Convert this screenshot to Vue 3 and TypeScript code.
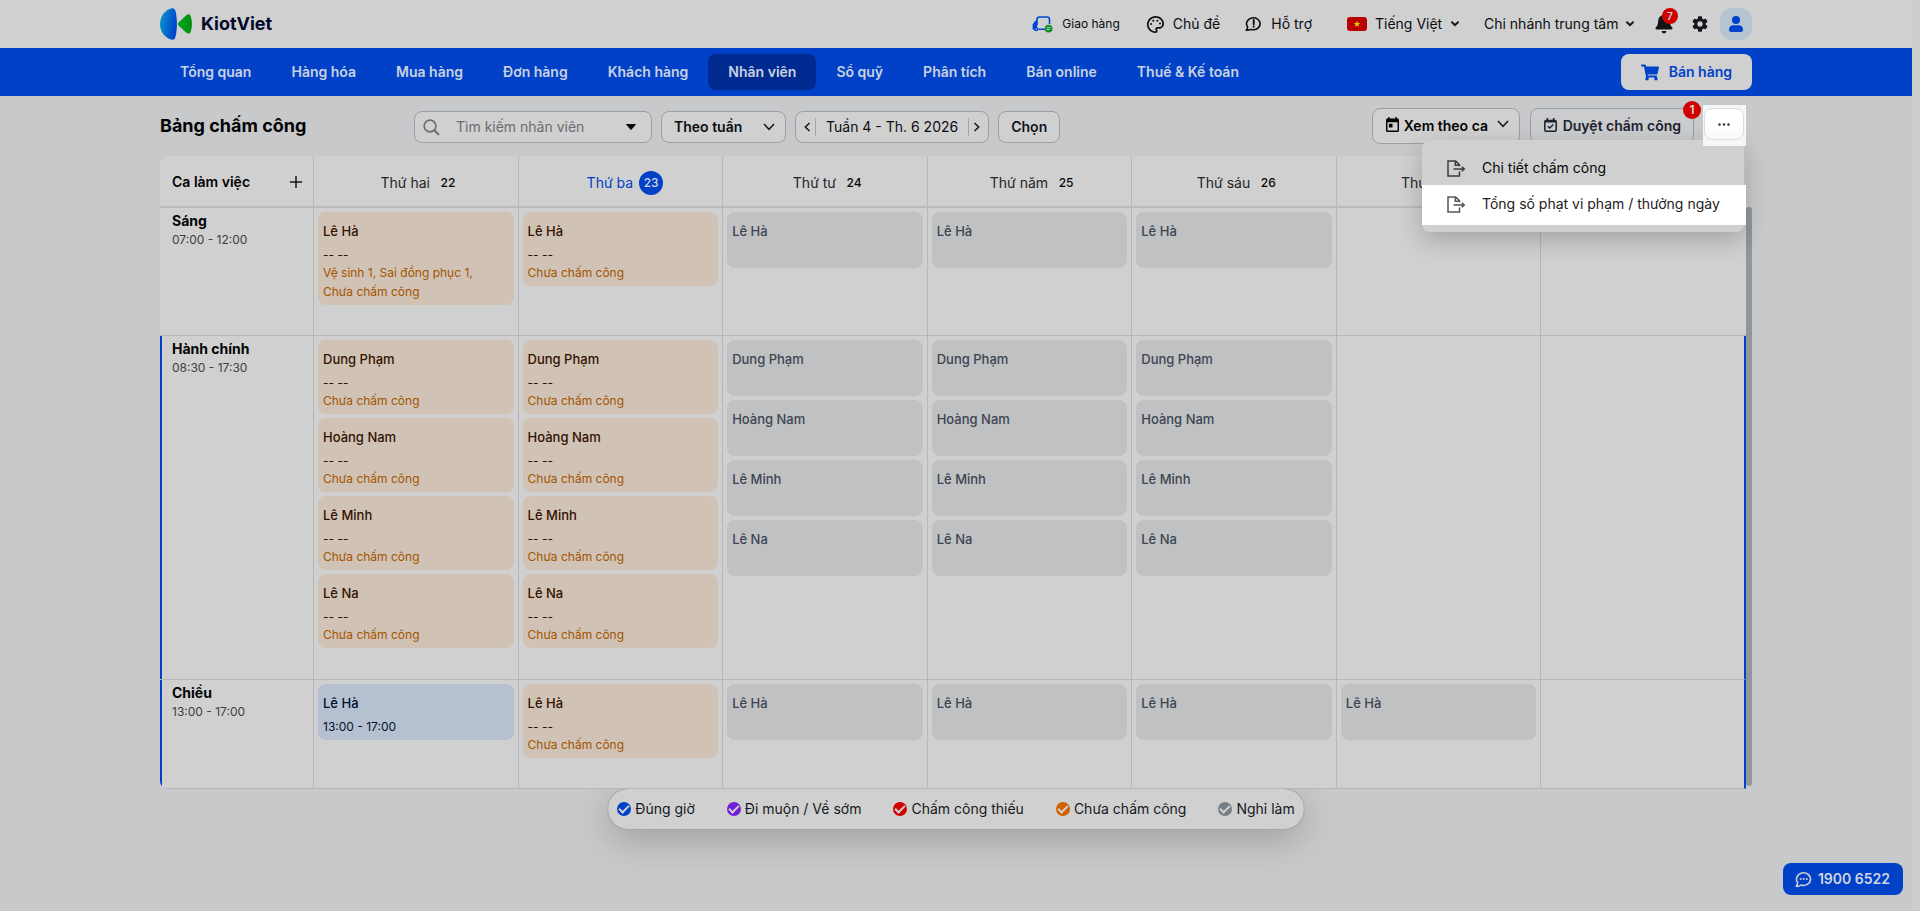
<script setup lang="ts">
type CardKind = 'missing' | 'ontime' | 'planned'

interface Card {
  name: string
  kind: CardKind
  time?: string
  notes: string[]
}

interface Shift {
  name: string
  hours: string
  current: boolean
  tall: boolean
  days: Card[][]
}

const menu = ['Tổng quan', 'Hàng hóa', 'Mua hàng', 'Đơn hàng', 'Khách hàng', 'Nhân viên', 'Sổ quỹ', 'Phân tích', 'Bán online', 'Thuế & Kế toán']
const activeMenu = 'Nhân viên'

const days = [
  { label: 'Thứ hai', date: 22 },
  { label: 'Thứ ba', date: 23 },
  { label: 'Thứ tư', date: 24 },
  { label: 'Thứ năm', date: 25 },
  { label: 'Thứ sáu', date: 26 },
  { label: 'Thứ bảy', date: 27 },
  { label: 'Chủ nhật', date: 28 },
]
const today = 23

const missing = (name: string, extra: string[] = []): Card => ({
  name,
  kind: 'missing',
  time: '-- --',
  notes: [...extra, 'Chưa chấm công'],
})
const planned = (name: string): Card => ({ name, kind: 'planned', notes: [] })
const team = ['Dung Phạm', 'Hoàng Nam', 'Lê Minh', 'Lê Na']

const shifts: Shift[] = [
  {
    name: 'Sáng',
    hours: '07:00 - 12:00',
    current: false,
    tall: false,
    days: [
      [missing('Lê Hà', ['Vệ sinh 1, ', 'Sai đồng phục 1, '])],
      [missing('Lê Hà')],
      [planned('Lê Hà')],
      [planned('Lê Hà')],
      [planned('Lê Hà')],
      [],
      [],
    ],
  },
  {
    name: 'Hành chính',
    hours: '08:30 - 17:30',
    current: true,
    tall: true,
    days: [
      team.map((n) => missing(n)),
      team.map((n) => missing(n)),
      team.map(planned),
      team.map(planned),
      team.map(planned),
      [],
      [],
    ],
  },
  {
    name: 'Chiều',
    hours: '13:00 - 17:00',
    current: true,
    tall: false,
    days: [
      [{ name: 'Lê Hà', kind: 'ontime', time: '13:00 - 17:00', notes: [] }],
      [missing('Lê Hà')],
      [planned('Lê Hà')],
      [planned('Lê Hà')],
      [planned('Lê Hà')],
      [planned('Lê Hà')],
      [],
    ],
  },
]

const legend = [
  { label: 'Đúng giờ', tone: 'blue' },
  { label: 'Đi muộn / Về sớm', tone: 'purple' },
  { label: 'Chấm công thiếu', tone: 'red' },
  { label: 'Chưa chấm công', tone: 'orange' },
  { label: 'Nghỉ làm', tone: 'gray' },
]

const exportsMenu = [
  { label: 'Chi tiết chấm công', active: false },
  { label: 'Tổng số phạt vi phạm / thưởng ngày', active: true },
]
</script>

<template>
  <div class="app">
    <header class="topbar">
      <a class="brand" href="#">
        <svg width="32" height="32" viewBox="0 0 32 32" aria-hidden="true">
          <defs>
            <linearGradient id="wing" x1="0" y1="0" x2="1" y2="0.3">
              <stop offset="0" stop-color="#0a9bc9" />
              <stop offset="1" stop-color="#0046cc" />
            </linearGradient>
            <linearGradient id="leaf" x1="0" y1="0" x2="1" y2="0">
              <stop offset="0" stop-color="#00ac20" />
              <stop offset="1" stop-color="#0a8a10" />
            </linearGradient>
          </defs>
          <path d="M12 0.2C14 0 15 1 15.700 4C17.300 11 17.300 21 15.700 28C15 31 14 32 12 31.800C5 30 0 24 0 16S5 2 12 0.200Z" fill="url(#wing)" />
          <path d="M18.400 14.600L26 7.400C28 5.700 29.800 6 30.600 8C32.400 13 32.400 19 30.600 24C29.800 26 28 26.300 26 24.600L18.400 17.400C17.600 16.600 17.600 15.400 18.400 14.600Z" fill="url(#leaf)" />
        </svg>
        <span>KiotViet</span>
      </a>

      <div class="top-actions">
        <a class="top-link delivery" href="#">
          <svg width="21" height="17" viewBox="0 0 21 17" aria-hidden="true">
            <path d="M5 9V3.500Q5 1 7.500 1H15Q17.500 1 17.500 3.500V8M6.500 13.200H13" fill="none" stroke="#0047d0" stroke-width="1.600" />
            <path d="M5.200 4.800H3.200L0.600 8.600V13.400H2A1.600 1.600 0 0 0 5.200 13.600Z" fill="#0047d0" />
            <circle cx="4.400" cy="13.200" r="2" fill="#0047d0" />
            <circle cx="4.400" cy="13.200" r="0.700" fill="#d0d0d0" />
            <circle cx="16.600" cy="12.600" r="3.900" fill="#0f8f26" />
            <path d="M14.600 11.700H18.600M14.600 13.500H17.600" stroke="#d0d0d0" stroke-width="0.900" />
          </svg>
          <span>Giao hàng</span>
        </a>
        <a class="top-link theme" href="#">
          <svg width="17" height="17" viewBox="2 2 20 20" aria-hidden="true">
            <path fill="#0a0d12" d="M12 22C6.490 22 2 17.510 2 12S6.490 2 12 2s10 4.040 10 9c0 3.310-2.690 6-6 6h-1.770c-.28 0-.5.22-.5.5 0 .12.050.23.130.33.410.47.640 1.060.640 1.670A2.500 2.500 0 0 1 12 22zm0-18c-4.410 0-8 3.590-8 8s3.590 8 8 8c.28 0 .5-.22.5-.5a.54.54 0 0 0-.14-.35c-.41-.46-.63-1.050-.63-1.650a2.500 2.500 0 0 1 2.500-2.500H16c2.210 0 4-1.790 4-4 0-3.860-3.590-7-8-7z" />
            <g fill="#0a0d12"><circle cx="6.800" cy="11.500" r="1.200" /><circle cx="9.400" cy="7.700" r="1.200" /><circle cx="14.200" cy="7.500" r="1.200" /><circle cx="17.300" cy="10.800" r="1.200" /></g>
          </svg>
          <span>Chủ đề</span>
        </a>
        <a class="top-link support" href="#">
          <svg width="17" height="16" viewBox="0 0 17 16" aria-hidden="true">
            <path d="M2.600 11A6.800 6 0 1 1 6 13.400Q4.200 14.400 1.200 14.300Q2.700 13 2.600 11Z" fill="none" stroke="#0a0d12" stroke-width="1.600" stroke-linejoin="round" />
            <path d="M8.700 4V8.200" stroke="#0a0d12" stroke-width="1.900" stroke-linecap="round" />
            <circle cx="8.700" cy="10.600" r="1.100" fill="#0a0d12" />
          </svg>
          <span>Hỗ trợ</span>
        </a>
        <div class="picker language">
          <svg width="20" height="14" viewBox="0 0 20 14" aria-hidden="true">
            <rect width="20" height="14" rx="3" fill="#b80000" />
            <path d="M10 3.500L10.900 6H13.400L11.400 7.600L12.100 10.100L10 8.600L7.900 10.100L8.600 7.600L6.600 6H9.100Z" fill="#d8d000" />
          </svg>
          <select aria-label="Ngôn ngữ"><option>Tiếng Việt</option></select>
          <svg class="small-caret" width="8" height="6" viewBox="0 0 8 6" aria-hidden="true"><path d="M1 1.200L4 4.200L7 1.200" /></svg>
        </div>
        <div class="picker branch">
          <select aria-label="Chi nhánh"><option>Chi nhánh trung tâm</option></select>
          <svg class="small-caret" width="8" height="6" viewBox="0 0 8 6" aria-hidden="true"><path d="M1 1.200L4 4.200L7 1.200" /></svg>
        </div>
        <button class="plain bell" type="button" aria-label="Thông báo">
          <svg width="18" height="20" viewBox="0 0 18 20" aria-hidden="true">
            <path d="M9 1C5.500 1 3.400 3.600 3.200 7C3 11 2 12 0.800 13.600C0 14.800 0.600 15.600 1.800 15.600H16.200C17.400 15.600 18 14.800 17.200 13.600C16 12 15 11 14.800 7C14.600 3.600 12.500 1 9 1Z" fill="#11151a" />
            <path d="M6.600 17H11.400A2.400 2.400 0 0 1 6.600 17Z" fill="#11151a" />
          </svg>
          <span class="badge">7</span>
        </button>
        <button class="plain gear" type="button" aria-label="Thiết lập">
          <svg width="16" height="16" viewBox="2 2 20 20" aria-hidden="true">
            <path fill="#11151a" d="M19.140 12.940c.04-.3.060-.61.060-.94s-.02-.64-.07-.94l2.030-1.580a.49.49 0 0 0 .12-.61l-1.920-3.320a.49.49 0 0 0-.59-.22l-2.390.96a7 7 0 0 0-1.620-.94l-.36-2.540a.48.48 0 0 0-.48-.41h-3.840a.47.47 0 0 0-.47.41l-.36 2.540c-.59.24-1.130.57-1.620.94l-2.390-.96a.48.48 0 0 0-.59.22L2.740 8.870a.47.47 0 0 0 .12.61l2.030 1.580a6 6 0 0 0 0 1.880l-2.030 1.580a.49.49 0 0 0-.12.61l1.920 3.320c.12.220.370.290.590.220l2.390-.96c.5.380 1.030.7 1.620.94l.36 2.540c.05.240.240.410.480.410h3.840c.24 0 .44-.17.470-.41l.36-2.540a7 7 0 0 0 1.620-.94l2.390.96c.22.080.47 0 .59-.22l1.920-3.320a.47.47 0 0 0-.12-.61zM12 15.300a3.300 3.300 0 1 1 0-6.600 3.300 3.300 0 0 1 0 6.600z" />
          </svg>
        </button>
        <button class="plain avatar" type="button" aria-label="Tài khoản">
          <svg width="14" height="16" viewBox="0 0 14 16" aria-hidden="true">
            <circle cx="7" cy="4" r="4" fill="#0043cb" />
            <path d="M0 13.500C0 10.800 2 9.300 4.500 9.300H9.500C12 9.300 14 10.800 14 13.500V14Q14 16 12 16H2Q0 16 0 14Z" fill="#0043cb" />
          </svg>
        </button>
      </div>
    </header>

    <nav class="mainnav" aria-label="Chính">
      <a v-for="item in menu" :key="item" href="#" :class="['nav-item', { active: item === activeMenu }]">{{ item }}</a>
      <button class="sell" type="button">
        <svg width="18" height="17" viewBox="0 0 576 512" aria-hidden="true">
          <path fill="#0043cb" d="M528.120 301.320l47.270-208C578.800 78.300 567.390 64 551.990 64H159.210l-9.170-44.810C147.760 8.020 137.930 0 126.530 0H24C10.740 0 0 10.740 0 24v16c0 13.260 10.740 24 24 24h69.880l70.250 343.430C147.320 417.100 136 435.220 136 456c0 30.930 25.070 56 56 56s56-25.070 56-56c0-15.670-6.440-29.830-16.810-40h209.620C430.440 426.170 424 440.330 424 456c0 30.930 25.070 56 56 56s56-25.070 56-56c0-22.170-12.890-41.330-31.580-50.410l5.520-24.280c3.410-15.020-8-29.320-23.400-29.320H218.120l-6.540-32h293.150c11.190 0 20.900-7.760 23.400-18.680z" />
        </svg>
        <span>Bán hàng</span>
      </button>
    </nav>

    <main class="content">
      <div class="toolbar">
        <h1>Bảng chấm công</h1>
        <div class="filters">
          <div class="box search">
            <svg width="17" height="17" viewBox="0 0 17 17" aria-hidden="true">
              <circle cx="7" cy="7" r="5.900" fill="none" stroke="#6a6e73" stroke-width="1.600" />
              <path d="M11.300 11.300L16 16" stroke="#6a6e73" stroke-width="2" />
            </svg>
            <input type="text" aria-label="Tìm kiếm nhân viên" placeholder="Tìm kiếm nhân viên" />
            <button class="plain" type="button" aria-label="Mở danh sách nhân viên">
              <svg width="10" height="6" viewBox="0 0 10 6" aria-hidden="true"><path d="M0.500 0H9.500Q10 0.300 9.700 0.800L5.600 5.500Q5 6 4.400 5.500L0.300 0.800Q0 0.300 0.500 0Z" fill="#05070a" /></svg>
            </button>
          </div>
          <div class="box range">
            <select aria-label="Khoảng thời gian"><option>Theo tuần</option></select>
            <svg class="caret" width="12" height="8" viewBox="0 0 12 8" aria-hidden="true"><path d="M1 1L6 6.300L11 1" /></svg>
          </div>
          <div class="box week">
            <button class="plain prev" type="button" aria-label="Tuần trước"><svg class="caret" width="7" height="10" viewBox="0 0 7 10" aria-hidden="true"><path d="M5.500 1L1.300 5L5.500 9" /></svg></button>
            <span class="week-label">Tuần 4 - Th. 6 2026</span>
            <button class="plain next" type="button" aria-label="Tuần sau"><svg class="caret" width="7" height="10" viewBox="0 0 7 10" aria-hidden="true"><path d="M1.500 1L5.700 5L1.500 9" /></svg></button>
          </div>
          <button class="box choose" type="button">Chọn</button>
        </div>

        <div class="actions">
          <div class="box view">
            <svg width="13" height="15" viewBox="3 1 18 20" preserveAspectRatio="none" aria-hidden="true">
              <path fill="#020305" d="M19 3h-1V1h-2v2H8V1H6v2H5c-1.110 0-1.990.9-1.990 2L3 19c0 1.100.89 2 2 2h14c1.100 0 2-.9 2-2V5c0-1.100-.9-2-2-2zm0 16H5V8h14v11zM7 10h5v5H7z" />
            </svg>
            <select aria-label="Chế độ xem"><option>Xem theo ca</option></select>
            <svg class="caret" width="12" height="8" viewBox="0 0 12 8" aria-hidden="true"><path d="M1 1L6 6.300L11 1" /></svg>
          </div>
          <button class="box approve" type="button">
            <svg width="13" height="14" viewBox="0 0 13 14" aria-hidden="true">
              <path d="M2 2.500H11Q12.200 2.500 12.200 3.700V12Q12.200 13.200 11 13.200H2Q0.800 13.200 0.800 12V3.700Q0.800 2.500 2 2.500Z" fill="none" stroke="#1a2230" stroke-width="1.500" />
              <path d="M1 3.600H12M3.400 0V3M9.600 0V3" stroke="#1a2230" stroke-width="1.600" />
              <path d="M3.800 8.200L5.700 10L9.300 6.400" fill="none" stroke="#1a2230" stroke-width="1.400" />
            </svg>
            <span>Duyệt chấm công</span>
            <span class="count">1</span>
          </button>
          <div class="more">
            <button class="more-btn" type="button" aria-label="Thêm" aria-haspopup="menu" aria-expanded="true">
              <svg width="12" height="3" viewBox="0 0 12 3" aria-hidden="true"><circle cx="1.500" cy="1.500" r="1.300" /><circle cx="6" cy="1.500" r="1.300" /><circle cx="10.500" cy="1.500" r="1.300" /></svg>
            </button>
            <ul class="menu">
              <li v-for="entry in exportsMenu" :key="entry.label">
                <button type="button" :class="['menu-item', { lit: entry.active }]">
                  <svg width="19" height="17" viewBox="0 0 19 17" aria-hidden="true">
                    <path d="M12.500 6.300V4.800L8.700 1H1V16H12.500V11.500M8.300 1V5.200H12.500M6.500 9H17M14.800 6.800L17.300 9L14.800 11.200" />
                  </svg>
                  <span>{{ entry.label }}</span>
                </button>
              </li>
            </ul>
          </div>
        </div>
      </div>

      <div class="board">
        <table>
          <thead>
            <tr>
              <th scope="col" class="corner">
                <div>
                  <span>Ca làm việc</span>
                  <button class="plain" type="button" aria-label="Thêm ca">
                    <svg width="12" height="12" viewBox="0 0 12 12" aria-hidden="true"><path d="M6 0V12M0 6H12" stroke="#15181c" stroke-width="1.500" /></svg>
                  </button>
                </div>
              </th>
              <th v-for="day in days" :key="day.date" scope="col">
                <div :class="['day', { today: day.date === today }]">
                  <span>{{ day.label }}</span><b>{{ day.date }}</b>
                </div>
              </th>
            </tr>
          </thead>
          <tbody>
            <tr v-for="shift in shifts" :key="shift.name" :class="{ current: shift.current, tall: shift.tall }">
              <th scope="row" class="shift">
                <strong>{{ shift.name }}</strong>
                <span>{{ shift.hours }}</span>
              </th>
              <td v-for="(cards, i) in shift.days" :key="i">
                <div class="stack">
                  <article v-for="card in cards" :key="card.name" :class="['card', card.kind]">
                    <div class="name">{{ card.name }}</div>
                    <div v-if="card.time" class="time">{{ card.time }}</div>
                    <div v-if="card.notes.length" class="notes">
                      <span v-for="note in card.notes" :key="note">{{ note }}</span>
                    </div>
                  </article>
                </div>
              </td>
            </tr>
          </tbody>
        </table>
        <div class="thumb"></div>
      </div>

      <div class="legend">
        <label v-for="item in legend" :key="item.label" :class="item.tone">
          <input type="checkbox" checked />
          <span>{{ item.label }}</span>
        </label>
      </div>
    </main>

    <a class="hotline" href="#">
      <svg width="17" height="17" viewBox="0 0 17 17" aria-hidden="true">
        <path d="M2.600 11.500A7 6.300 0 1 1 6 14Q4 15.600 1.200 15.300Q2.700 13.600 2.600 11.500Z" fill="none" stroke="#d0d0d0" stroke-width="1.600" stroke-linejoin="round" />
        <g fill="#d0d0d0"><circle cx="5.600" cy="8" r="1" /><circle cx="8.700" cy="8" r="1" /><circle cx="11.800" cy="8" r="1" /></g>
      </svg>
      <span>1900 6522</span>
    </a>
  </div>
</template>

<style>
body {
  background: #c8c9cb;
}
</style>

<style scoped>
.app,
.app * {
  box-sizing: border-box;
}
.app {
  min-height: 100vh;
  border-right: 8px solid #cccccc;
  background: #c8c9cb;
  color: #0a0d12;
  font: 14px/20px Inter, "Open Sans", sans-serif;
}
a {
  color: inherit;
  text-decoration: none;
}
svg {
  display: block;
  flex: none;
}
button,
input,
select {
  font: inherit;
  color: inherit;
  margin: 0;
}
select {
  appearance: none;
  border: 0;
  padding: 0;
  background: none;
}
.plain {
  display: flex;
  align-items: center;
  justify-content: center;
  border: 0;
  padding: 0;
  background: none;
}

.topbar {
  display: flex;
  align-items: center;
  justify-content: space-between;
  height: 48px;
  padding: 0 160px;
  background: #d0d0d0;
}
.brand {
  display: flex;
  align-items: center;
  gap: 9px;
  font-size: 18px;
  font-weight: 700;
  color: #03092c;
}
.top-actions,
.top-link,
.picker {
  display: flex;
  align-items: center;
}
.top-link {
  gap: 9px;
}
.delivery {
  font-size: 12px;
  margin-right: 27px;
}
.theme {
  margin-right: 25px;
}
.support {
  margin-right: 35px;
}
.language {
  gap: 8px;
  margin-right: 25px;
}
.branch {
  gap: 7px;
  margin-right: 21px;
}
.small-caret {
  fill: none;
  stroke: #15181c;
  stroke-width: 2;
  stroke-linecap: round;
}
.bell {
  position: relative;
  margin-right: 19px;
}
.badge {
  position: absolute;
  top: -6px;
  right: -5px;
  width: 16px;
  height: 16px;
  border-radius: 8px;
  background: #d00000;
  color: #d6d0d0;
  font-size: 10px;
  line-height: 16px;
  font-weight: 600;
}
.gear {
  margin-right: 12px;
}
.avatar {
  width: 32px;
  height: 32px;
  border-radius: 12px;
  background: #b5c3d2;
}

.mainnav {
  display: flex;
  align-items: center;
  height: 48px;
  padding: 0 160px;
  background: #0041c8;
}
.nav-item {
  padding: 8px 20px;
  border-radius: 8px;
  color: #c9d2e2;
  font-weight: 600;
}
.nav-item.active {
  background: #002a90;
}
.sell {
  display: flex;
  align-items: center;
  gap: 10px;
  height: 36px;
  margin-left: auto;
  padding: 0 20px;
  border: 0;
  border-radius: 8px;
  background: #d0d0d0;
  color: #0041c8;
  font-weight: 600;
}

.content {
  padding: 0 160px;
}
.toolbar {
  display: flex;
  align-items: flex-start;
  height: 60px;
  padding: 12px 8px 0 0;
}
h1 {
  flex: none;
  width: 254px;
  margin: 0;
  font-size: 18px;
  line-height: 36px;
  font-weight: 700;
  color: #020305;
}
.filters {
  display: flex;
  gap: 9px;
  padding-top: 3px;
}
.box {
  display: flex;
  align-items: center;
  height: 32px;
  border: 1px solid #9b9fa5;
  border-radius: 8px;
  background: #d0d0d0;
}
.search {
  width: 238px;
  padding: 0 15px 0 8px;
}
.search input {
  flex: 1;
  min-width: 0;
  margin-left: 16px;
  padding: 0;
  border: 0;
  outline: 0;
  background: none;
}
.search input::placeholder {
  color: #686d74;
  opacity: 1;
}
.range {
  gap: 18px;
  width: 125px;
  padding: 0 10px 0 12px;
  font-weight: 600;
}
.range select {
  flex: 1;
}
.caret {
  fill: none;
  stroke: #15181c;
  stroke-width: 1.5;
}
.week {
  padding: 0 4px;
}
.week .plain {
  width: 16px;
  height: 18px;
}
.week .prev {
  border-right: 1px solid #9ba8b0;
}
.week .next {
  border-left: 1px solid #9ba8b0;
}
.week-label {
  padding: 0 10px;
}
.choose {
  padding: 0 12px;
  font-weight: 600;
  color: #11151a;
}
.actions {
  display: flex;
  gap: 10px;
  margin-left: auto;
}
.view,
.approve {
  position: relative;
  height: 36px;
  padding: 0 10px 0 13px;
  font-weight: 600;
}
.view > svg,
.approve > svg {
  margin-bottom: 3px;
}
.view {
  gap: 5px;
  color: #020305;
}
.view .caret {
  margin: 0 0 5px 3px;
}
.approve {
  gap: 6px;
  padding-right: 12px;
  background: #cbccce;
  color: #1a2230;
}
.count {
  position: absolute;
  top: -8px;
  right: -8px;
  width: 18px;
  height: 18px;
  border-radius: 9px;
  background: #d00000;
  color: #e0d6d6;
  font-size: 12px;
  line-height: 18px;
}
.more {
  position: relative;
}
.more::before {
  content: "";
  position: absolute;
  z-index: 3;
  inset: -3px -2px -2px -1px;
  background: #f5f6f8;
}
.more-btn {
  position: relative;
  z-index: 4;
  display: flex;
  align-items: center;
  justify-content: center;
  width: 40px;
  height: 32px;
  padding: 0;
  border: 1px solid #d9dce1;
  border-radius: 8px;
  background: linear-gradient(#ffffff 50%, #f8f8f9);
}
.more-btn svg {
  fill: #33373c;
}
.menu {
  position: absolute;
  z-index: 2;
  top: 32px;
  right: 0;
  width: 322px;
  margin: 0;
  padding: 10px 0;
  list-style: none;
  border-radius: 8px;
  background: #d0d0d0;
  box-shadow: 0 8px 24px rgba(0, 0, 0, 0.22);
}
.menu-item {
  position: relative;
  display: flex;
  align-items: center;
  gap: 16px;
  width: 100%;
  height: 36px;
  padding: 0 0 0 25px;
  border: 0;
  background: none;
  text-align: left;
  color: #050607;
}
.menu-item svg {
  position: relative;
  fill: none;
  stroke: #3c3c3c;
  stroke-width: 1.5;
}
.menu-item span {
  position: relative;
}
.menu-item.lit {
  color: #1f2023;
}
.menu-item.lit svg {
  stroke: #55565a;
}
.menu-item.lit::before {
  content: "";
  position: absolute;
  inset: -1px -2px -3px 0;
  background: #ffffff;
}

.board {
  display: grid;
  grid-template-columns: minmax(0, 1fr) 6px;
}
table {
  width: 100%;
  table-layout: fixed;
  border-collapse: separate;
  border-spacing: 0;
  border-radius: 8px 0 0 8px;
  overflow: hidden;
  background: #d0d0d0;
}
.thumb {
  margin: 51px 0 3px;
  border-radius: 3px;
  background: #8f969e;
}
th,
td {
  padding: 0;
  border-right: 1px solid #b6b7b8;
  border-bottom: 1px solid #b6b7b8;
  text-align: left;
  vertical-align: top;
  font-weight: 400;
}
tr > :last-child {
  border-right: 0;
}
thead th {
  height: 52px;
  border-bottom: 2px solid #bbbbbc;
  vertical-align: middle;
}
.corner {
  width: 154px;
}
.corner div {
  display: flex;
  align-items: center;
  justify-content: space-between;
  padding: 2px 11px 0 12px;
  font-weight: 600;
  color: #020305;
}
.day {
  display: flex;
  align-items: center;
  justify-content: center;
  gap: 6px;
  padding: 3px 0 0 9px;
  color: #22262b;
}
.day b {
  width: 24px;
  border-radius: 12px;
  text-align: center;
  font-size: 12px;
  line-height: 24px;
  font-weight: 500;
  color: #05070a;
}
.today {
  color: #0041c8;
}
.today b {
  background: #0041c8;
  color: #d0d6e2;
}
.current .shift {
  box-shadow: inset 2px 0 0 #0041c8;
}
.current > :last-child {
  border-right: 2px solid #0041c8;
}
.tall {
  height: 344px;
}
.shift {
  padding: 3px 12px;
}
.shift strong,
.shift span {
  display: block;
}
.shift strong {
  line-height: 20px;
  font-weight: 700;
  color: #020305;
}
.shift span {
  font-size: 12px;
  line-height: 18px;
  color: #3c3f43;
}
.stack {
  display: flex;
  flex-direction: column;
  gap: 4px;
  padding: 4px 4px 30px;
}
.card {
  min-height: 56px;
  padding: 9px 5px 4px;
  border-radius: 8px;
}
.name {
  margin-bottom: 5px;
  font-size: 13px;
  line-height: 20px;
  font-weight: 500;
}
.time {
  font-size: 12px;
  line-height: 17px;
}
.notes {
  font-size: 12px;
  line-height: 19px;
  color: #a35400;
}
.notes span {
  display: inline-block;
  white-space: pre;
}
.missing {
  background: #d0c3b5;
  color: #331200;
}
.ontime {
  background: #b5c1d0;
  color: #00102e;
}
.planned {
  background: #c0c1c3;
  color: #3c4552;
}

.legend {
  display: flex;
  align-items: center;
  gap: 32px;
  width: fit-content;
  height: 40px;
  margin: 0 auto;
  padding: 0 9px;
  border-radius: 20px;
  background: #d0d0d0;
  color: #15181c;
  box-shadow: 0 0 1px rgba(0, 0, 0, 0.5), 0 10px 36px rgba(0, 0, 0, 0.22);
}
.legend label {
  display: flex;
  align-items: center;
  gap: 4px;
}
.legend input {
  appearance: none;
  display: grid;
  place-items: center;
  width: 14px;
  height: 14px;
  border-radius: 7px;
  background: #0041c8;
}
.legend input::before {
  content: "";
  width: 8px;
  height: 4px;
  margin-top: -2px;
  border: solid #d0d0d0;
  border-width: 0 0 2px 2px;
  transform: rotate(-45deg);
}
.legend .purple input {
  background: #6f1fd6;
}
.legend .red input {
  background: #d00000;
}
.legend .orange input {
  background: #d06000;
}
.legend .gray input {
  background: #767e88;
}

.hotline {
  position: fixed;
  right: 17px;
  bottom: 16px;
  display: flex;
  align-items: center;
  gap: 6px;
  height: 32px;
  padding: 0 13px 0 12px;
  border-radius: 8px;
  background: #0041c8;
  color: #d0d6e2;
  font-weight: 600;
}
</style>
